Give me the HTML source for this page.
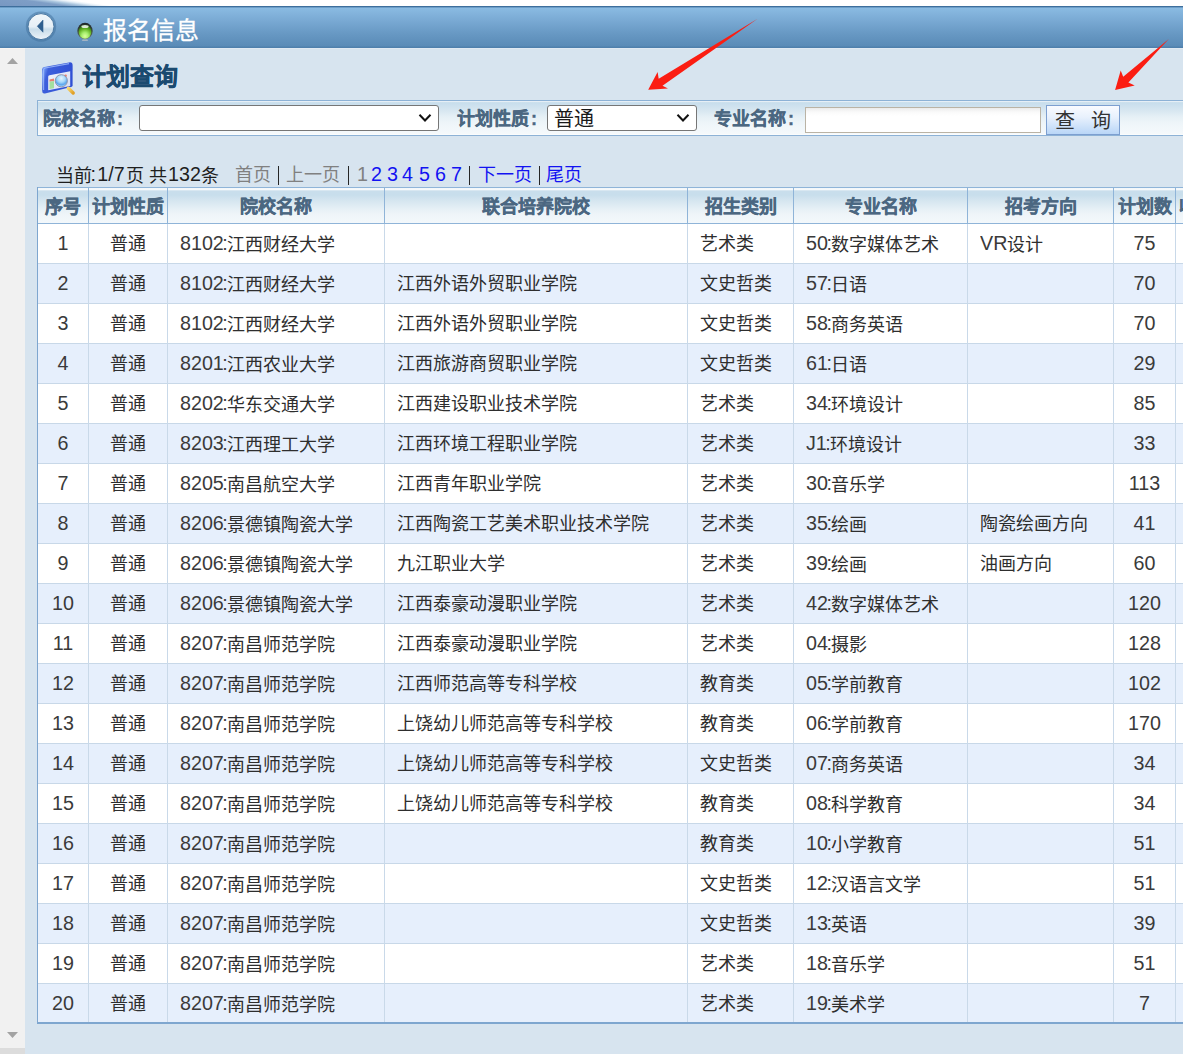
<!DOCTYPE html>
<html lang="zh-CN"><head><meta charset="utf-8"><style>
*{margin:0;padding:0;box-sizing:border-box}
html,body{width:1183px;height:1054px;overflow:hidden}
body{position:relative;background:#d7e4ef;font-family:"Liberation Sans",sans-serif;color:#2e2e2e}
.a{position:absolute}
.n{font-size:19.7px;position:relative;top:-1px}
.c{margin:0 -1px 0 -1.5px}
.ctx .n{color:#3a3a3a}
.topstrip{left:0;top:0;width:1183px;height:6px;background:linear-gradient(8deg,#7898c2 0px,#7e9ec6 9.2px,#a9c5de 11.8px,#e8f1f8 14.2px,#ffffff 15.8px,#ffffff 100%)}
.hdr{left:0;top:6px;width:1183px;height:42px;background:linear-gradient(#2c5d8b 0px,#4f80ad 1px,#8abbe2 2px,#7aaad4 14px,#6798c3 28px,#5a8bb7 40px,#4f80ac 41px,#4f80ac 42px)}
.sb{left:0;top:48px;width:25px;height:1006px;background:#f1f1f1}
.sbb{left:0;top:1048px;width:25px;height:6px;background:#dcdcdc}
.ttl{left:103px;top:15px;font-size:24px;line-height:32px;color:#fff;-webkit-text-stroke:0.3px #fff;white-space:nowrap}
.qt{left:82px;top:60px;font-size:24px;line-height:34px;color:#1b4a70;font-weight:bold;white-space:nowrap;-webkit-text-stroke:0.4px #1b4a70}
.bar{left:37px;top:100px;width:1146px;height:36px;border-top:1px solid #8db2d6;border-bottom:1px solid #8db2d6;border-left:1px solid #8db2d6;background:linear-gradient(#e6eff6 0px,#e6eff6 0.8px,#c8deec 1.6px,#cadfed 3px,#d6e6f0 9px,#e6f0f6 16px,#eef5f9 22px,#f3f8fb 30px,#f5f9fb 32.5px,#fafcfd 33.5px)}
.lbl{font-size:18px;font-weight:bold;color:#4b6781;line-height:24px;white-space:nowrap;-webkit-text-stroke:0.35px #4b6781}
.sel{background:#fff;border:1px solid #767676;border-radius:3px;height:26px}
.pg{top:163px;font-size:18px;line-height:24px;white-space:nowrap;color:#1e1e1e}
.pg .g{color:#808080}
.pg .s{color:#333}
.pg .b{color:#1212f2}
.th{background:linear-gradient(#f2f7fa 0px,#f6f9fb 1.5px,#c9deec 3px,#c8deec 7px,#d6e6f0 13px,#e6f0f6 21px,#eff5f9 27px,#f3f8fb 35px)}
.htx{font-size:18px;font-weight:bold;color:#4b6781;line-height:40px;-webkit-text-stroke:0.35px #4b6781;white-space:nowrap;text-align:center;overflow:hidden}
.ctx{font-size:18px;line-height:41px;color:#2e2e2e;white-space:nowrap;overflow:hidden}
</style></head><body>

<div class="a topstrip"></div>
<div class="a hdr"></div>
<svg class="a" style="left:24px;top:9px" width="34" height="34" viewBox="0 0 34 34">
<defs><linearGradient id="bbg" x1="0" y1="0" x2="0" y2="1"><stop offset="0" stop-color="#f2f7fa"/><stop offset="0.5" stop-color="#e6eff6"/><stop offset="0.6" stop-color="#c9ddea"/><stop offset="1" stop-color="#eef4f9"/></linearGradient></defs>
<circle cx="17" cy="17.6" r="15.2" fill="#3f6f9c" opacity="0.5"/>
<circle cx="17" cy="17.6" r="13" fill="url(#bbg)" stroke="#4a78a2" stroke-width="1"/>
<path d="M13.3 17.3 L19 11.1 L19 23.2 Z" fill="#2f5f8e" stroke="#2f5f8e" stroke-width="0.6" stroke-linejoin="round"/>
</svg>
<svg class="a" style="left:76px;top:22px" width="18" height="20" viewBox="0 0 18 20">
<defs><radialGradient id="gd" cx="0.5" cy="0.82" r="0.75"><stop offset="0" stop-color="#dcff9c"/><stop offset="0.35" stop-color="#a6ee6e"/><stop offset="0.7" stop-color="#64b424"/><stop offset="1" stop-color="#2a6e12"/></radialGradient>
<linearGradient id="gr" x1="0" y1="0" x2="0" y2="1"><stop offset="0" stop-color="#1e2428"/><stop offset="0.5" stop-color="#3c4a40"/><stop offset="1" stop-color="#6a7468"/></linearGradient></defs>
<ellipse cx="9" cy="18.2" rx="3.2" ry="0.9" fill="#b4bcc6" opacity="0.8"/>
<ellipse cx="9" cy="9" rx="7.7" ry="8.3" fill="url(#gr)"/>
<ellipse cx="9" cy="9.7" rx="6.4" ry="7" fill="url(#gd)"/>
<ellipse cx="9" cy="4.6" rx="3.6" ry="1.5" fill="#eef4ea" opacity="0.9"/>
</svg>
<div class="a ttl">报名信息</div>
<div class="a sb"></div><div class="a sbb"></div>
<div class="a" style="left:25px;top:48px;width:1158px;height:1px;background:#e0e9f2"></div><div class="a" style="left:0;top:48px;width:25px;height:1px;background:#f8f5f2"></div>
<svg class="a" style="left:0;top:48px" width="25" height="30"><path d="M7 16 L18 16 L12.5 10 Z" fill="#a3a3a3"/></svg>
<svg class="a" style="left:0;top:1024px" width="25" height="24"><path d="M7 8 L18 8 L12.5 14 Z" fill="#a3a3a3"/></svg>
<svg class="a" style="left:38px;top:58px" width="42" height="40" viewBox="0 0 42 40">
<defs>
<linearGradient id="fr" x1="0" y1="0" x2="1" y2="0.3"><stop offset="0" stop-color="#2f4fd0"/><stop offset="0.12" stop-color="#6e96f4"/><stop offset="0.25" stop-color="#3d5fdc"/><stop offset="1" stop-color="#3050d4"/></linearGradient>
<linearGradient id="pn" x1="0" y1="0" x2="1" y2="1"><stop offset="0" stop-color="#f2f4fc"/><stop offset="1" stop-color="#d4dcf4"/></linearGradient>
<radialGradient id="lens" cx="0.5" cy="0.3" r="0.7"><stop offset="0" stop-color="#e4f6ff"/><stop offset="0.45" stop-color="#a8d8fa"/><stop offset="0.75" stop-color="#5aa6ee"/><stop offset="1" stop-color="#b8dcf8"/></radialGradient>
<linearGradient id="hd" x1="0" y1="0" x2="1" y2="1"><stop offset="0" stop-color="#f8d870"/><stop offset="1" stop-color="#e0a028"/></linearGradient>
</defs>
<path d="M4.2 11.2 Q4.2 9.4 6.2 9 L31 4.4 Q34.6 3.8 34.6 7.4 L34.6 27.2 Q34.6 28.6 33 29 L7 35.4 Q4.2 36 4.2 33 Z" fill="url(#fr)"/>
<path d="M5.6 32 L5.6 11.6 Q5.6 10.3 7.2 10 L31 5.6" fill="none" stroke="#a8c4ff" stroke-width="1.1" opacity="0.75"/>
<path d="M10.2 18.8 Q10.2 17.6 11.5 17.3 L32.2 13.3 L32.2 28 L10.2 32.3 Z" fill="url(#pn)"/>
<path d="M11.5 21.5 L16 20.6 L16 23 L11.5 23.8 Z" fill="#e88070"/>
<path d="M11.5 23.8 L16 23 L16 30.2 L11.5 31 Z" fill="#a4e0a0"/>
<circle cx="27.6" cy="17.8" r="1.3" fill="#e88070"/>
<line x1="30.3" y1="30.2" x2="35.2" y2="35" stroke="url(#hd)" stroke-width="3.4" stroke-linecap="round"/>
<circle cx="23.3" cy="22.8" r="6.1" fill="url(#lens)" stroke="#8890a8" stroke-width="0.9"/>
</svg>
<div class="a qt">计划查询</div>
<div class="a bar"></div>
<div class="a lbl" style="left:43px;top:107px">院校名称<span style="margin-left:2px">:</span></div>
<div class="a sel" style="left:139px;top:105px;width:300px"></div>
<svg class="a" style="left:418px;top:113px" width="14" height="10" viewBox="0 0 14 10"><path d="M1.5 1.8 L7 7.5 L12.5 1.8" fill="none" stroke="#111" stroke-width="2"/></svg>
<div class="a lbl" style="left:457px;top:107px">计划性质<span style="margin-left:2px">:</span></div>
<div class="a sel" style="left:547px;top:105px;width:150px"></div>
<div class="a" style="left:554px;top:105px;font-size:20px;line-height:28px;color:#1a1a1a">普通</div>
<svg class="a" style="left:676px;top:113px" width="14" height="10" viewBox="0 0 14 10"><path d="M1.5 1.8 L7 7.5 L12.5 1.8" fill="none" stroke="#111" stroke-width="2"/></svg>
<div class="a lbl" style="left:714px;top:107px">专业名称<span style="margin-left:2px">:</span></div>
<div class="a" style="left:805px;top:107px;width:236px;height:26px;border:1px solid #bab3a5;background:linear-gradient(#ebebeb 0px,#fafafa 4px,#fff 8px)"></div>
<div class="a" style="left:1046px;top:105px;width:74px;height:30px;border:1px solid #7d9fd0;background:linear-gradient(#f9fbff 0px,#e8f1fd 40%,#b9d6f7 100%)"></div>
<div class="a" style="left:1055px;top:106px;font-size:20px;line-height:30px;color:#333;white-space:nowrap">查&nbsp;&nbsp;&nbsp;<span style="margin-left:-1px">询</span></div>
<div class="a pg" style="left:56px">当前<span class="n" style="margin:0 1.3px 0 -1.5px">:</span><span class="n" style="margin-right:1.4px">1/7</span>页 共<span class="n" style="margin-left:1px">132</span>条</div>
<div class="a" style="left:278px;top:166px;width:1.4px;height:19px;background:#262626"></div>
<div class="a" style="left:348px;top:166px;width:1.4px;height:19px;background:#262626"></div>
<div class="a" style="left:469px;top:166px;width:1.4px;height:19px;background:#262626"></div>
<div class="a" style="left:539px;top:166px;width:1.4px;height:19px;background:#262626"></div>
<div class="a pg" style="left:235px"><span class="g">首页</span></div>
<div class="a pg" style="left:286px"><span class="g">上一页</span></div>
<div class="a pg" style="left:357px"><span class="g"><span class="n">1</span></span></div>
<div class="a pg" style="left:371px"><span class="b"><span class="n">2</span></span></div>
<div class="a pg" style="left:387px"><span class="b"><span class="n">3</span></span></div>
<div class="a pg" style="left:402px"><span class="b"><span class="n">4</span></span></div>
<div class="a pg" style="left:419px"><span class="b"><span class="n">5</span></span></div>
<div class="a pg" style="left:435px"><span class="b"><span class="n">6</span></span></div>
<div class="a pg" style="left:451px"><span class="b"><span class="n">7</span></span></div>
<div class="a pg" style="left:478px"><span class="b">下一页</span></div>
<div class="a pg" style="left:546px"><span class="b">尾页</span></div>
<div class="a th" style="left:37px;top:188px;width:1146px;height:35px"></div>
<div class="a" style="left:38px;top:224px;width:1146px;height:39px;background:#ffffff"></div>
<div class="a" style="left:38px;top:264px;width:1146px;height:39px;background:#e6effc"></div>
<div class="a" style="left:38px;top:304px;width:1146px;height:39px;background:#ffffff"></div>
<div class="a" style="left:38px;top:344px;width:1146px;height:39px;background:#e6effc"></div>
<div class="a" style="left:38px;top:384px;width:1146px;height:39px;background:#ffffff"></div>
<div class="a" style="left:38px;top:424px;width:1146px;height:39px;background:#e6effc"></div>
<div class="a" style="left:38px;top:464px;width:1146px;height:39px;background:#ffffff"></div>
<div class="a" style="left:38px;top:504px;width:1146px;height:39px;background:#e6effc"></div>
<div class="a" style="left:38px;top:544px;width:1146px;height:39px;background:#ffffff"></div>
<div class="a" style="left:38px;top:584px;width:1146px;height:39px;background:#e6effc"></div>
<div class="a" style="left:38px;top:624px;width:1146px;height:39px;background:#ffffff"></div>
<div class="a" style="left:38px;top:664px;width:1146px;height:39px;background:#e6effc"></div>
<div class="a" style="left:38px;top:704px;width:1146px;height:39px;background:#ffffff"></div>
<div class="a" style="left:38px;top:744px;width:1146px;height:39px;background:#e6effc"></div>
<div class="a" style="left:38px;top:784px;width:1146px;height:39px;background:#ffffff"></div>
<div class="a" style="left:38px;top:824px;width:1146px;height:39px;background:#e6effc"></div>
<div class="a" style="left:38px;top:864px;width:1146px;height:39px;background:#ffffff"></div>
<div class="a" style="left:38px;top:904px;width:1146px;height:39px;background:#e6effc"></div>
<div class="a" style="left:38px;top:944px;width:1146px;height:39px;background:#ffffff"></div>
<div class="a" style="left:38px;top:984px;width:1146px;height:39px;background:#e6effc"></div>
<div class="a" style="left:38px;top:263px;width:1146px;height:1px;background:#c8d8e8"></div>
<div class="a" style="left:38px;top:303px;width:1146px;height:1px;background:#c8d8e8"></div>
<div class="a" style="left:38px;top:343px;width:1146px;height:1px;background:#c8d8e8"></div>
<div class="a" style="left:38px;top:383px;width:1146px;height:1px;background:#c8d8e8"></div>
<div class="a" style="left:38px;top:423px;width:1146px;height:1px;background:#c8d8e8"></div>
<div class="a" style="left:38px;top:463px;width:1146px;height:1px;background:#c8d8e8"></div>
<div class="a" style="left:38px;top:503px;width:1146px;height:1px;background:#c8d8e8"></div>
<div class="a" style="left:38px;top:543px;width:1146px;height:1px;background:#c8d8e8"></div>
<div class="a" style="left:38px;top:583px;width:1146px;height:1px;background:#c8d8e8"></div>
<div class="a" style="left:38px;top:623px;width:1146px;height:1px;background:#c8d8e8"></div>
<div class="a" style="left:38px;top:663px;width:1146px;height:1px;background:#c8d8e8"></div>
<div class="a" style="left:38px;top:703px;width:1146px;height:1px;background:#c8d8e8"></div>
<div class="a" style="left:38px;top:743px;width:1146px;height:1px;background:#c8d8e8"></div>
<div class="a" style="left:38px;top:783px;width:1146px;height:1px;background:#c8d8e8"></div>
<div class="a" style="left:38px;top:823px;width:1146px;height:1px;background:#c8d8e8"></div>
<div class="a" style="left:38px;top:863px;width:1146px;height:1px;background:#c8d8e8"></div>
<div class="a" style="left:38px;top:903px;width:1146px;height:1px;background:#c8d8e8"></div>
<div class="a" style="left:38px;top:943px;width:1146px;height:1px;background:#c8d8e8"></div>
<div class="a" style="left:38px;top:983px;width:1146px;height:1px;background:#c8d8e8"></div>
<div class="a" style="left:88px;top:224px;width:1px;height:799px;background:#c9d9e9"></div>
<div class="a" style="left:167px;top:224px;width:1px;height:799px;background:#c9d9e9"></div>
<div class="a" style="left:384px;top:224px;width:1px;height:799px;background:#c9d9e9"></div>
<div class="a" style="left:687px;top:224px;width:1px;height:799px;background:#c9d9e9"></div>
<div class="a" style="left:793px;top:224px;width:1px;height:799px;background:#c9d9e9"></div>
<div class="a" style="left:967px;top:224px;width:1px;height:799px;background:#c9d9e9"></div>
<div class="a" style="left:1113px;top:224px;width:1px;height:799px;background:#c9d9e9"></div>
<div class="a" style="left:1175px;top:224px;width:1px;height:799px;background:#c9d9e9"></div>
<div class="a" style="left:88px;top:187px;width:1px;height:36px;background:#8fb4d8"></div>
<div class="a" style="left:167px;top:187px;width:1px;height:36px;background:#8fb4d8"></div>
<div class="a" style="left:384px;top:187px;width:1px;height:36px;background:#8fb4d8"></div>
<div class="a" style="left:687px;top:187px;width:1px;height:36px;background:#8fb4d8"></div>
<div class="a" style="left:793px;top:187px;width:1px;height:36px;background:#8fb4d8"></div>
<div class="a" style="left:967px;top:187px;width:1px;height:36px;background:#8fb4d8"></div>
<div class="a" style="left:1113px;top:187px;width:1px;height:36px;background:#8fb4d8"></div>
<div class="a" style="left:1175px;top:187px;width:1px;height:36px;background:#8fb4d8"></div>
<div class="a" style="left:37px;top:187px;width:1146px;height:1px;background:#8fb4d8"></div>
<div class="a" style="left:37px;top:223px;width:1146px;height:1px;background:#8fb4d8"></div>
<div class="a" style="left:37px;top:187px;width:1px;height:837px;background:#7ea6cf"></div>
<div class="a" style="left:37px;top:1022px;width:1146px;height:2px;background:#7ea6cf"></div>
<div class="a htx" style="left:38px;top:187px;width:50px">序号</div>
<div class="a htx" style="left:89px;top:187px;width:78px">计划性质</div>
<div class="a htx" style="left:168px;top:187px;width:216px">院校名称</div>
<div class="a htx" style="left:385px;top:187px;width:302px">联合培养院校</div>
<div class="a htx" style="left:688px;top:187px;width:105px">招生类别</div>
<div class="a htx" style="left:794px;top:187px;width:173px">专业名称</div>
<div class="a htx" style="left:968px;top:187px;width:145px">招考方向</div>
<div class="a htx" style="left:1114px;top:187px;width:61px">计划数</div>
<div class="a htx" style="left:1179px;top:187px;width:40px;text-align:left">收</div>
<div class="a ctx" style="left:38px;top:224px;width:50px;text-align:center"><span class="n">1</span></div>
<div class="a ctx" style="left:89px;top:224px;width:78px;text-align:center">普通</div>
<div class="a ctx" style="left:180px;top:224px;width:204px"><span class="n">8102</span><span class="n c">:</span>江西财经大学</div>
<div class="a ctx" style="left:700px;top:224px;width:93px">艺术类</div>
<div class="a ctx" style="left:806px;top:224px;width:161px"><span class="n">50</span><span class="n c">:</span>数字媒体艺术</div>
<div class="a ctx" style="left:980px;top:224px;width:133px"><span class="n">VR</span>设计</div>
<div class="a ctx" style="left:1114px;top:224px;width:61px;text-align:center"><span class="n">75</span></div>
<div class="a ctx" style="left:38px;top:264px;width:50px;text-align:center"><span class="n">2</span></div>
<div class="a ctx" style="left:89px;top:264px;width:78px;text-align:center">普通</div>
<div class="a ctx" style="left:180px;top:264px;width:204px"><span class="n">8102</span><span class="n c">:</span>江西财经大学</div>
<div class="a ctx" style="left:397px;top:264px;width:290px">江西外语外贸职业学院</div>
<div class="a ctx" style="left:700px;top:264px;width:93px">文史哲类</div>
<div class="a ctx" style="left:806px;top:264px;width:161px"><span class="n">57</span><span class="n c">:</span>日语</div>
<div class="a ctx" style="left:1114px;top:264px;width:61px;text-align:center"><span class="n">70</span></div>
<div class="a ctx" style="left:38px;top:304px;width:50px;text-align:center"><span class="n">3</span></div>
<div class="a ctx" style="left:89px;top:304px;width:78px;text-align:center">普通</div>
<div class="a ctx" style="left:180px;top:304px;width:204px"><span class="n">8102</span><span class="n c">:</span>江西财经大学</div>
<div class="a ctx" style="left:397px;top:304px;width:290px">江西外语外贸职业学院</div>
<div class="a ctx" style="left:700px;top:304px;width:93px">文史哲类</div>
<div class="a ctx" style="left:806px;top:304px;width:161px"><span class="n">58</span><span class="n c">:</span>商务英语</div>
<div class="a ctx" style="left:1114px;top:304px;width:61px;text-align:center"><span class="n">70</span></div>
<div class="a ctx" style="left:38px;top:344px;width:50px;text-align:center"><span class="n">4</span></div>
<div class="a ctx" style="left:89px;top:344px;width:78px;text-align:center">普通</div>
<div class="a ctx" style="left:180px;top:344px;width:204px"><span class="n">8201</span><span class="n c">:</span>江西农业大学</div>
<div class="a ctx" style="left:397px;top:344px;width:290px">江西旅游商贸职业学院</div>
<div class="a ctx" style="left:700px;top:344px;width:93px">文史哲类</div>
<div class="a ctx" style="left:806px;top:344px;width:161px"><span class="n">61</span><span class="n c">:</span>日语</div>
<div class="a ctx" style="left:1114px;top:344px;width:61px;text-align:center"><span class="n">29</span></div>
<div class="a ctx" style="left:38px;top:384px;width:50px;text-align:center"><span class="n">5</span></div>
<div class="a ctx" style="left:89px;top:384px;width:78px;text-align:center">普通</div>
<div class="a ctx" style="left:180px;top:384px;width:204px"><span class="n">8202</span><span class="n c">:</span>华东交通大学</div>
<div class="a ctx" style="left:397px;top:384px;width:290px">江西建设职业技术学院</div>
<div class="a ctx" style="left:700px;top:384px;width:93px">艺术类</div>
<div class="a ctx" style="left:806px;top:384px;width:161px"><span class="n">34</span><span class="n c">:</span>环境设计</div>
<div class="a ctx" style="left:1114px;top:384px;width:61px;text-align:center"><span class="n">85</span></div>
<div class="a ctx" style="left:38px;top:424px;width:50px;text-align:center"><span class="n">6</span></div>
<div class="a ctx" style="left:89px;top:424px;width:78px;text-align:center">普通</div>
<div class="a ctx" style="left:180px;top:424px;width:204px"><span class="n">8203</span><span class="n c">:</span>江西理工大学</div>
<div class="a ctx" style="left:397px;top:424px;width:290px">江西环境工程职业学院</div>
<div class="a ctx" style="left:700px;top:424px;width:93px">艺术类</div>
<div class="a ctx" style="left:806px;top:424px;width:161px"><span class="n">J1</span><span class="n c">:</span>环境设计</div>
<div class="a ctx" style="left:1114px;top:424px;width:61px;text-align:center"><span class="n">33</span></div>
<div class="a ctx" style="left:38px;top:464px;width:50px;text-align:center"><span class="n">7</span></div>
<div class="a ctx" style="left:89px;top:464px;width:78px;text-align:center">普通</div>
<div class="a ctx" style="left:180px;top:464px;width:204px"><span class="n">8205</span><span class="n c">:</span>南昌航空大学</div>
<div class="a ctx" style="left:397px;top:464px;width:290px">江西青年职业学院</div>
<div class="a ctx" style="left:700px;top:464px;width:93px">艺术类</div>
<div class="a ctx" style="left:806px;top:464px;width:161px"><span class="n">30</span><span class="n c">:</span>音乐学</div>
<div class="a ctx" style="left:1114px;top:464px;width:61px;text-align:center"><span class="n">113</span></div>
<div class="a ctx" style="left:38px;top:504px;width:50px;text-align:center"><span class="n">8</span></div>
<div class="a ctx" style="left:89px;top:504px;width:78px;text-align:center">普通</div>
<div class="a ctx" style="left:180px;top:504px;width:204px"><span class="n">8206</span><span class="n c">:</span>景德镇陶瓷大学</div>
<div class="a ctx" style="left:397px;top:504px;width:290px">江西陶瓷工艺美术职业技术学院</div>
<div class="a ctx" style="left:700px;top:504px;width:93px">艺术类</div>
<div class="a ctx" style="left:806px;top:504px;width:161px"><span class="n">35</span><span class="n c">:</span>绘画</div>
<div class="a ctx" style="left:980px;top:504px;width:133px">陶瓷绘画方向</div>
<div class="a ctx" style="left:1114px;top:504px;width:61px;text-align:center"><span class="n">41</span></div>
<div class="a ctx" style="left:38px;top:544px;width:50px;text-align:center"><span class="n">9</span></div>
<div class="a ctx" style="left:89px;top:544px;width:78px;text-align:center">普通</div>
<div class="a ctx" style="left:180px;top:544px;width:204px"><span class="n">8206</span><span class="n c">:</span>景德镇陶瓷大学</div>
<div class="a ctx" style="left:397px;top:544px;width:290px">九江职业大学</div>
<div class="a ctx" style="left:700px;top:544px;width:93px">艺术类</div>
<div class="a ctx" style="left:806px;top:544px;width:161px"><span class="n">39</span><span class="n c">:</span>绘画</div>
<div class="a ctx" style="left:980px;top:544px;width:133px">油画方向</div>
<div class="a ctx" style="left:1114px;top:544px;width:61px;text-align:center"><span class="n">60</span></div>
<div class="a ctx" style="left:38px;top:584px;width:50px;text-align:center"><span class="n">10</span></div>
<div class="a ctx" style="left:89px;top:584px;width:78px;text-align:center">普通</div>
<div class="a ctx" style="left:180px;top:584px;width:204px"><span class="n">8206</span><span class="n c">:</span>景德镇陶瓷大学</div>
<div class="a ctx" style="left:397px;top:584px;width:290px">江西泰豪动漫职业学院</div>
<div class="a ctx" style="left:700px;top:584px;width:93px">艺术类</div>
<div class="a ctx" style="left:806px;top:584px;width:161px"><span class="n">42</span><span class="n c">:</span>数字媒体艺术</div>
<div class="a ctx" style="left:1114px;top:584px;width:61px;text-align:center"><span class="n">120</span></div>
<div class="a ctx" style="left:38px;top:624px;width:50px;text-align:center"><span class="n">11</span></div>
<div class="a ctx" style="left:89px;top:624px;width:78px;text-align:center">普通</div>
<div class="a ctx" style="left:180px;top:624px;width:204px"><span class="n">8207</span><span class="n c">:</span>南昌师范学院</div>
<div class="a ctx" style="left:397px;top:624px;width:290px">江西泰豪动漫职业学院</div>
<div class="a ctx" style="left:700px;top:624px;width:93px">艺术类</div>
<div class="a ctx" style="left:806px;top:624px;width:161px"><span class="n">04</span><span class="n c">:</span>摄影</div>
<div class="a ctx" style="left:1114px;top:624px;width:61px;text-align:center"><span class="n">128</span></div>
<div class="a ctx" style="left:38px;top:664px;width:50px;text-align:center"><span class="n">12</span></div>
<div class="a ctx" style="left:89px;top:664px;width:78px;text-align:center">普通</div>
<div class="a ctx" style="left:180px;top:664px;width:204px"><span class="n">8207</span><span class="n c">:</span>南昌师范学院</div>
<div class="a ctx" style="left:397px;top:664px;width:290px">江西师范高等专科学校</div>
<div class="a ctx" style="left:700px;top:664px;width:93px">教育类</div>
<div class="a ctx" style="left:806px;top:664px;width:161px"><span class="n">05</span><span class="n c">:</span>学前教育</div>
<div class="a ctx" style="left:1114px;top:664px;width:61px;text-align:center"><span class="n">102</span></div>
<div class="a ctx" style="left:38px;top:704px;width:50px;text-align:center"><span class="n">13</span></div>
<div class="a ctx" style="left:89px;top:704px;width:78px;text-align:center">普通</div>
<div class="a ctx" style="left:180px;top:704px;width:204px"><span class="n">8207</span><span class="n c">:</span>南昌师范学院</div>
<div class="a ctx" style="left:397px;top:704px;width:290px">上饶幼儿师范高等专科学校</div>
<div class="a ctx" style="left:700px;top:704px;width:93px">教育类</div>
<div class="a ctx" style="left:806px;top:704px;width:161px"><span class="n">06</span><span class="n c">:</span>学前教育</div>
<div class="a ctx" style="left:1114px;top:704px;width:61px;text-align:center"><span class="n">170</span></div>
<div class="a ctx" style="left:38px;top:744px;width:50px;text-align:center"><span class="n">14</span></div>
<div class="a ctx" style="left:89px;top:744px;width:78px;text-align:center">普通</div>
<div class="a ctx" style="left:180px;top:744px;width:204px"><span class="n">8207</span><span class="n c">:</span>南昌师范学院</div>
<div class="a ctx" style="left:397px;top:744px;width:290px">上饶幼儿师范高等专科学校</div>
<div class="a ctx" style="left:700px;top:744px;width:93px">文史哲类</div>
<div class="a ctx" style="left:806px;top:744px;width:161px"><span class="n">07</span><span class="n c">:</span>商务英语</div>
<div class="a ctx" style="left:1114px;top:744px;width:61px;text-align:center"><span class="n">34</span></div>
<div class="a ctx" style="left:38px;top:784px;width:50px;text-align:center"><span class="n">15</span></div>
<div class="a ctx" style="left:89px;top:784px;width:78px;text-align:center">普通</div>
<div class="a ctx" style="left:180px;top:784px;width:204px"><span class="n">8207</span><span class="n c">:</span>南昌师范学院</div>
<div class="a ctx" style="left:397px;top:784px;width:290px">上饶幼儿师范高等专科学校</div>
<div class="a ctx" style="left:700px;top:784px;width:93px">教育类</div>
<div class="a ctx" style="left:806px;top:784px;width:161px"><span class="n">08</span><span class="n c">:</span>科学教育</div>
<div class="a ctx" style="left:1114px;top:784px;width:61px;text-align:center"><span class="n">34</span></div>
<div class="a ctx" style="left:38px;top:824px;width:50px;text-align:center"><span class="n">16</span></div>
<div class="a ctx" style="left:89px;top:824px;width:78px;text-align:center">普通</div>
<div class="a ctx" style="left:180px;top:824px;width:204px"><span class="n">8207</span><span class="n c">:</span>南昌师范学院</div>
<div class="a ctx" style="left:700px;top:824px;width:93px">教育类</div>
<div class="a ctx" style="left:806px;top:824px;width:161px"><span class="n">10</span><span class="n c">:</span>小学教育</div>
<div class="a ctx" style="left:1114px;top:824px;width:61px;text-align:center"><span class="n">51</span></div>
<div class="a ctx" style="left:38px;top:864px;width:50px;text-align:center"><span class="n">17</span></div>
<div class="a ctx" style="left:89px;top:864px;width:78px;text-align:center">普通</div>
<div class="a ctx" style="left:180px;top:864px;width:204px"><span class="n">8207</span><span class="n c">:</span>南昌师范学院</div>
<div class="a ctx" style="left:700px;top:864px;width:93px">文史哲类</div>
<div class="a ctx" style="left:806px;top:864px;width:161px"><span class="n">12</span><span class="n c">:</span>汉语言文学</div>
<div class="a ctx" style="left:1114px;top:864px;width:61px;text-align:center"><span class="n">51</span></div>
<div class="a ctx" style="left:38px;top:904px;width:50px;text-align:center"><span class="n">18</span></div>
<div class="a ctx" style="left:89px;top:904px;width:78px;text-align:center">普通</div>
<div class="a ctx" style="left:180px;top:904px;width:204px"><span class="n">8207</span><span class="n c">:</span>南昌师范学院</div>
<div class="a ctx" style="left:700px;top:904px;width:93px">文史哲类</div>
<div class="a ctx" style="left:806px;top:904px;width:161px"><span class="n">13</span><span class="n c">:</span>英语</div>
<div class="a ctx" style="left:1114px;top:904px;width:61px;text-align:center"><span class="n">39</span></div>
<div class="a ctx" style="left:38px;top:944px;width:50px;text-align:center"><span class="n">19</span></div>
<div class="a ctx" style="left:89px;top:944px;width:78px;text-align:center">普通</div>
<div class="a ctx" style="left:180px;top:944px;width:204px"><span class="n">8207</span><span class="n c">:</span>南昌师范学院</div>
<div class="a ctx" style="left:700px;top:944px;width:93px">艺术类</div>
<div class="a ctx" style="left:806px;top:944px;width:161px"><span class="n">18</span><span class="n c">:</span>音乐学</div>
<div class="a ctx" style="left:1114px;top:944px;width:61px;text-align:center"><span class="n">51</span></div>
<div class="a ctx" style="left:38px;top:984px;width:50px;text-align:center"><span class="n">20</span></div>
<div class="a ctx" style="left:89px;top:984px;width:78px;text-align:center">普通</div>
<div class="a ctx" style="left:180px;top:984px;width:204px"><span class="n">8207</span><span class="n c">:</span>南昌师范学院</div>
<div class="a ctx" style="left:700px;top:984px;width:93px">艺术类</div>
<div class="a ctx" style="left:806px;top:984px;width:161px"><span class="n">19</span><span class="n c">:</span>美术学</div>
<div class="a ctx" style="left:1114px;top:984px;width:61px;text-align:center"><span class="n">7</span></div>
<svg class="a" style="left:0;top:0" width="1183" height="120" viewBox="0 0 1183 120">
<path d="M757.6 18.8 L662.5 85.8 L668 88.6 L648.2 89.7 L657.6 72.1 L658.7 78.7 Z" fill="#fb1d12"/>
<path d="M1168.8 39.1 L1128.4 82.6 L1134.7 85.4 L1115.1 90 L1120.7 70.4 L1123.2 76.7 Z" fill="#fb1d12"/>
</svg>
</body></html>
